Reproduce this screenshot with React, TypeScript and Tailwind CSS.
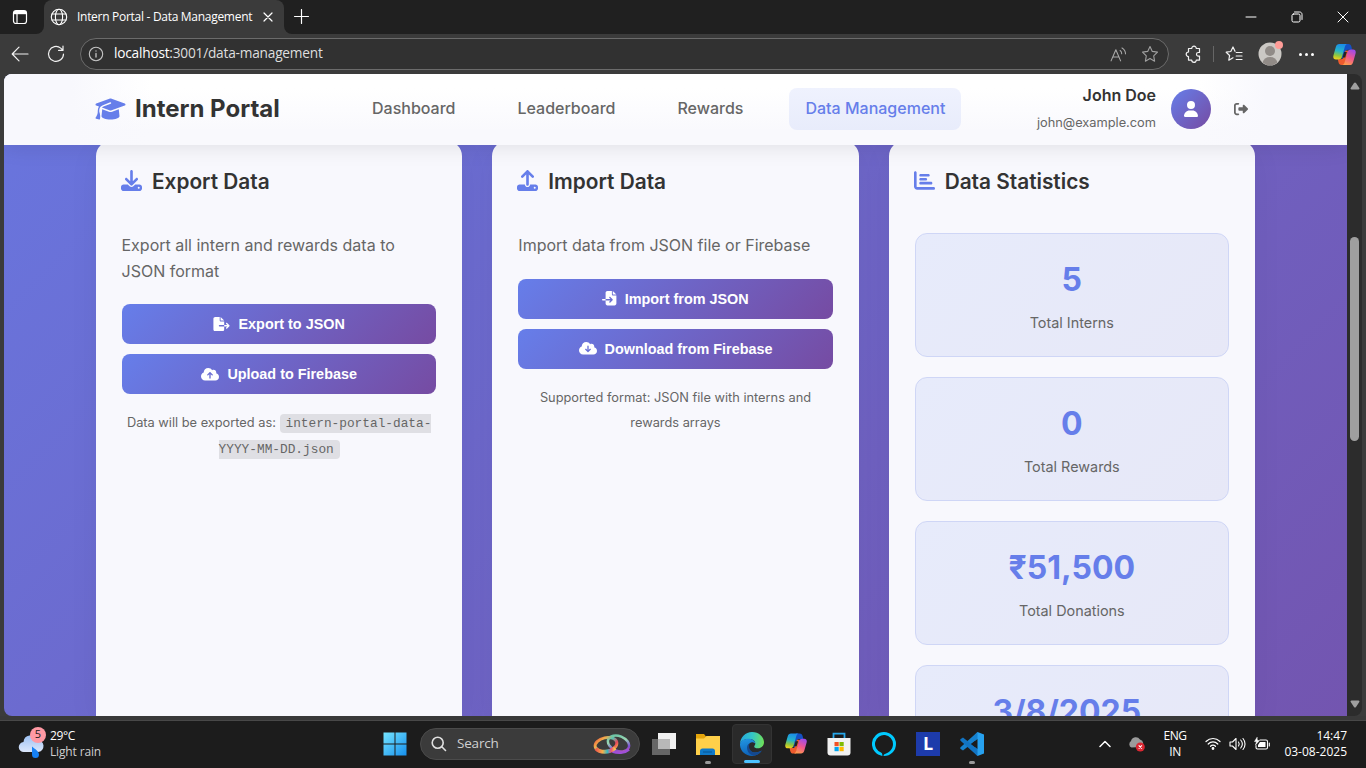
import React from "react";
import {
  FaGraduationCap, FaDownload, FaUpload, FaChartBar, FaFileExport, FaFileImport,
  FaCloudArrowUp, FaCloudArrowDown, FaUser, FaRightFromBracket,
} from "react-icons/fa6";

const S = { fill: "none", stroke: "currentColor", strokeLinecap: "round", strokeLinejoin: "round" } as const;

function CopilotIcon({ id, className }: { id: string; className: string }) {
  return (
    <svg viewBox="0 0 24 22" className={className}>
      <defs>
        <linearGradient id={id + "a"} x1="0.5" y1="0" x2="0.3" y2="1">
          <stop offset="0" stopColor="#1b8ce8" />
          <stop offset="0.45" stopColor="#25b5c9" />
          <stop offset="0.75" stopColor="#8fc63f" />
          <stop offset="1" stopColor="#f2d21c" />
        </linearGradient>
        <linearGradient id={id + "b"} x1="0.7" y1="0" x2="0.3" y2="1">
          <stop offset="0" stopColor="#a04be8" />
          <stop offset="0.5" stopColor="#f0568e" />
          <stop offset="1" stopColor="#ff9d4a" />
        </linearGradient>
      </defs>
      <path d="M12 0h4c2 0 2.700 1 3.200 2.700L20 6h-4.500c-1.500 0-2.200.8-2.700 2.300L11 15H9z" fill="#1450c4" />
      <path d="M12 22H9c-2 0-2.800-1-3.300-2.800L5 16h3.500c1.500 0 2.200-.8 2.700-2.300L13 7h3z" fill="#ee5b2e" />
      <path d="M6.500 0H15c-1.500.3-2.200 1.400-2.700 3.200L9.500 13c-.6 2.200-1.600 3.200-3.700 3.200H3C.8 16.200-.2 14.500.4 12L3 3C3.600 1 4.700 0 6.500 0z" fill={`url(#${id}a)`} />
      <path d="M17.500 22H9.500c1.500-.3 2.200-1.400 2.700-3.200L15 9c.6-2.200 1.600-3.200 3.700-3.200H21c2.200 0 3.200 1.700 2.600 4.200L21 19c-.6 2-1.700 3-3.500 3z" fill={`url(#${id}b)`} />
      <path d="M11.600 8.500h2.800l-1.700 5.600H9.900z" fill="#242424" />
    </svg>
  );
}

function TitleBar() {
  return (
    <div className="flex h-[34px] items-start bg-[#3b3b3b] text-white">
      <div className="flex h-[34px] w-11 items-center justify-center rounded-br-lg bg-[#202020] pr-1">
        <svg viewBox="0 0 16 16" className="size-4" {...S}>
          <rect x="1.500" y="1.500" width="13" height="13" rx="2.500" strokeWidth="1.200" />
          <path d="M5 5v9" strokeWidth="1.200" />
          <path d="M2 2h12v3.200H2z" fill="currentColor" stroke="none" />
        </svg>
      </div>
      <div className="h-[34px] w-60 bg-[#202020]">
        <div className="flex h-[34px] items-center rounded-t-lg bg-[#3b3b3b] pb-px pl-[6px]">
          <svg viewBox="0 0 18 18" className="size-[18px]" {...S} strokeWidth="1.100">
            <circle cx="9" cy="9" r="7.700" />
            <ellipse cx="9" cy="9" rx="3.600" ry="7.700" />
            <path d="M2 6h14M2 12h14" />
          </svg>
          <span className="ml-[9px] w-[176px] whitespace-nowrap font-['Open_Sans',sans-serif] text-[12px] tracking-[-0.29px]">Intern Portal - Data Management</span>
          <svg viewBox="0 0 10 10" className="ml-[10px] size-[10px]" {...S} strokeWidth="1.200"><path d="M1 1l8 8M9 1L1 9" /></svg>
        </div>
      </div>
      <div className="flex h-[34px] flex-1 items-center rounded-bl-lg bg-[#202020] pb-px">
        <svg viewBox="0 0 14 14" className="ml-[10px] size-[15px]" {...S} strokeWidth="1.100"><path d="M7 0.500v13M.5 7h13" /></svg>
        <svg viewBox="0 0 12 12" className="ml-auto size-3" {...S}><path d="M1 6h10" /></svg>
        <svg viewBox="0 0 12 12" className="ml-[34px] size-3" {...S}><rect x="1" y="3" width="8" height="8" rx="1.500" /><path d="M3.500 1h5.200C10 1 11 2 11 3.300v5.200" /></svg>
        <svg viewBox="0 0 12 12" className="ml-[34px] mr-[17px] size-3" {...S}><path d="M1 1l10 10M11 1L1 11" /></svg>
      </div>
    </div>
  );
}

function AddressBar() {
  return (
    <div className="flex h-10 items-center bg-[#3b3b3b] text-[#f2f2f2]">
      <svg viewBox="0 0 18 16" className="ml-[11px] h-4 w-[18px]" {...S} strokeWidth="1.200"><path d="M17 8H1.500M8 1.200L1.200 8 8 14.800" /></svg>
      <svg viewBox="0 0 18 18" className="ml-[18px] size-[18px]" {...S} strokeWidth="1.200"><path d="M16.500 9A7.500 7.500 0 1 1 13.700 3.100L16 5.200M16 1v4.400h-4.400" /></svg>
      <div className="ml-[15px] flex h-8 w-[1089px] items-center rounded-full border border-[#6b6b6b] bg-[#313131] pl-[7px] pr-[9px]">
        <svg viewBox="0 0 16 16" className="size-4 text-[#c4c4c4]" {...S}><circle cx="8" cy="8" r="6.700" strokeWidth="1.100" /><path d="M8 7.500v3.500M8 5v.1" strokeWidth="1.300" /></svg>
        <span className="ml-[10px] pb-px font-['Open_Sans',sans-serif] text-[13.700px] tracking-[-0.22px] text-[#dedede]"><span className="text-white">localhost</span>:3001/data-management</span>
        <svg viewBox="0 0 16 14" className="ml-auto h-[15px] w-[17px] text-[#aaaaaa]" {...S}><path d="M1 13L5.500 2.500 10 13M2.600 9.300h5.800M9.500 3.200c1 .6 1.500 1.600 1.500 3M11.300.8C13.500 2 14.600 4 14.600 6.400" /></svg>
        <svg viewBox="0 0 18 18" className="ml-[14px] size-[18px] text-[#a0a0a0]" {...S} strokeWidth="1.100"><path d="M9 1.500l2.300 4.900 5.200.7-3.800 3.700.9 5.400L9 13.600l-4.600 2.600.9-5.400L1.500 7.100l5.200-.7z" /></svg>
      </div>
      <svg viewBox="0 0 18 18" className="ml-4 size-[18px]" {...S} strokeWidth="1.200"><path d="M3.500 3.500h3.200a2.300 2.300 0 0 1 4.600 0h3.200v4h-1.200a1.800 1.800 0 0 0 0 3.600h1.200v4h-3.200a2.300 2.300 0 0 1-4.600 0H3.500v-3.500a2.300 2.300 0 0 1 0-4.600z" /></svg>
      <div className="ml-[10px] h-4 w-px bg-[#666666]" />
      <svg viewBox="0 0 18 18" className="ml-[11px] size-[18px]" {...S} strokeWidth="1.200"><path d="M8 12.800L3.800 15.200l.8-4.700L1.200 7.200l4.600-.7L8 2l2 4.300M11.200 7.500H17M11.200 11H17M11.200 14.500H17" /></svg>
      <div className="relative ml-[15px] size-6">
        <svg viewBox="0 0 24 24" className="size-6">
          <circle cx="12" cy="12" r="11.500" fill="#cbc8c4" />
          <circle cx="12" cy="9" r="5" fill="#918b87" />
          <path d="M4.500 20.500c1-3.500 3.500-5.500 7.500-5.500s6.500 2 7.500 5.500a11.500 11.500 0 0 1-15 0z" fill="#918b87" />
        </svg>
        <div className="absolute -right-px -top-px size-2 rounded-full bg-[#ff9d98]" />
      </div>
      <div className="ml-[17px] flex gap-[3px]">
        <i className="size-[3px] rounded-full bg-white" /><i className="size-[3px] rounded-full bg-white" /><i className="size-[3px] rounded-full bg-white" />
      </div>
      <CopilotIcon id="top" className="ml-[19px] h-[21px] w-[23px]" />
    </div>
  );
}

function SiteNav() {
  return (
    <nav className="relative z-10 flex h-[71px] shrink-0 items-center bg-[linear-gradient(90deg,#f8f8fd_0%,#f8f8fd_5%,#f8f8fd00_11%,#f8f8fd00_89%,#f8f8fd_94%,#f8f8fd_100%),linear-gradient(180deg,#ffffff_0%,#ffffff_20%,#f9f9fd_80%,#f9f9fd_100%)] px-[91px] pb-[2px] font-[Inter,sans-serif] shadow-[0_2px_20px_rgba(0,0,0,0.1)]">
      <div className="flex w-[185px] items-center gap-[9px]">
        <FaGraduationCap className="h-6 w-[31px] shrink-0 text-[#667eea]" />
        <span className="whitespace-nowrap text-[24px] font-bold text-[#333333]">Intern Portal</span>
      </div>
      <div className="ml-[76px] flex items-center gap-[30px] text-[16px] font-medium text-[#666666]">
        <span className="px-4 pb-[10px] pt-2">Dashboard</span>
        <span className="px-4 pb-[10px] pt-2">Leaderboard</span>
        <span className="px-4 pb-[10px] pt-2">Rewards</span>
        <span className="whitespace-nowrap rounded-lg bg-[linear-gradient(180deg,#eff2fe,#e8ecfb)] px-4 pb-[10px] pt-2 text-[#667eea]">Data Management</span>
      </div>
      <div className="ml-auto flex items-center">
        <div className="flex flex-col items-end text-[#333333]">
          <span className="text-[16px] font-semibold leading-[27px]">John Doe</span>
          <span className="text-[12.800px] leading-[27px] text-[#666666]">john@example.com</span>
        </div>
        <div className="ml-[15px] flex size-10 items-center justify-center rounded-full bg-[linear-gradient(135deg,#667eea,#764ba2)] text-white"><FaUser className="size-4" /></div>
        <FaRightFromBracket className="ml-[23px] mr-[8px] size-[14px] text-[#666666]" />
      </div>
    </nav>
  );
}

function ActionButton({ icon, label }: { icon: React.ReactNode; label: string }) {
  return (
    <button className="flex h-10 w-full items-center justify-center gap-2 rounded-lg bg-[linear-gradient(135deg,#667eea,#764ba2)] font-['Liberation_Sans',Arial,sans-serif] text-[14.400px] font-bold text-white">
      {icon}<span className="pt-[2px]">{label}</span>
    </button>
  );
}

function Card({ icon, title, children }: { icon: React.ReactNode; title: string; children: React.ReactNode }) {
  return (
    <section className="-mt-1 min-w-0 flex-1 rounded-t-[15px] bg-[#f8f8fd] px-[26px] shadow-[0_8px_32px_rgba(0,0,0,0.05)]">
      <h2 className="flex h-[80px] items-center gap-[10px] text-[20.800px] font-semibold text-[#333333]">
        <span className="-ml-px pb-px text-[#667eea]">{icon}</span><span className="pt-[2px]">{title}</span>
      </h2>
      {children}
    </section>
  );
}

const stats = [
  ["5", "Total Interns"],
  ["0", "Total Rewards"],
  ["₹51,500", "Total Donations"],
  ["3/8/2025,", "Last Updated"],
];

function Page() {
  return (
    <div className="flex min-w-0 flex-1 flex-col overflow-hidden rounded-bl-lg rounded-tl-lg bg-[linear-gradient(135deg,#667eea_-25%,#764ba2_130%)]">
      <SiteNav />
      <main className="flex min-h-0 flex-1 gap-[30px] px-[92px] font-[Inter,sans-serif] leading-[25.600px] text-[#666666]">
        <Card icon={<FaDownload className="size-[21px]" />} title="Export Data">
          <p className="-ml-[0.500px] mt-3 text-[16px]">Export all intern and rewards data to JSON format</p>
          <div className="mt-5 flex flex-col gap-[10px]">
            <ActionButton icon={<FaFileExport className="h-[14.400px] w-[17px]" />} label="Export to JSON" />
            <ActionButton icon={<FaCloudArrowUp className="h-[14.400px] w-[18px]" />} label="Upload to Firebase" />
          </div>
          <p className="-mx-1 mt-4 text-center text-[12.800px] leading-[26px]">
            Data will be exported as: <code className="rounded bg-[#dfdfe4] px-[6px] py-[2px] font-['Liberation_Mono','Courier_New',monospace] text-[12.800px] leading-none">intern-portal-data-YYYY-MM-DD.json</code>
          </p>
        </Card>
        <Card icon={<FaUpload className="size-[21px]" />} title="Import Data">
          <p className="mt-3 text-[16px]">Import data from JSON file or Firebase</p>
          <div className="mt-5 flex flex-col gap-[10px]">
            <ActionButton icon={<FaFileImport className="size-[14.400px]" />} label="Import from JSON" />
            <ActionButton icon={<FaCloudArrowDown className="h-[14.400px] w-[18px]" />} label="Download from Firebase" />
          </div>
          <p className="mt-4 text-center text-[12.800px]">Supported format: JSON file with interns and rewards arrays</p>
        </Card>
        <Card icon={<FaChartBar className="size-[21px]" />} title="Data Statistics">
          <div className="mt-3 flex flex-col gap-5">
            {stats.map(([value, label]) => (
              <div key={label} className="flex h-[124px] shrink-0 flex-col items-center rounded-xl border border-[#cfd6f6] bg-[linear-gradient(135deg,#e7ebfb,#e7e8f7)] pt-5">
                <strong className="text-[32px] font-bold leading-[51px] text-[#667eea]">{value}</strong>
                <span className="mt-[5px] text-[14.400px] leading-[25px]">{label}</span>
              </div>
            ))}
          </div>
        </Card>
      </main>
    </div>
  );
}

function Scrollbar() {
  return (
    <div className="mr-1 flex w-[15px] flex-col items-center rounded-r-lg bg-[#2c2c2c] py-[8px]">
      <svg viewBox="0 0 10 8" className="h-2 w-[10px] shrink-0"><path d="M4 1c.5-.8 1.500-.8 2 0l3.300 5c.4.700 0 1.500-.8 1.500h-7C.7 7.500.3 6.700.7 6z" fill="#9f9f9f" /></svg>
      <div className="mt-[147px] h-[204px] w-[9px] rounded-full bg-[#9f9f9f]" />
      <svg viewBox="0 0 10 8" className="mt-auto h-2 w-[10px] shrink-0 rotate-180"><path d="M4 1c.5-.8 1.500-.8 2 0l3.300 5c.4.700 0 1.500-.8 1.500h-7C.7 7.500.3 6.700.7 6z" fill="#9f9f9f" /></svg>
    </div>
  );
}

function EdgeIcon() {
  return (
    <svg viewBox="0 0 24 24" className="size-6">
      <defs>
        <linearGradient id="ea" x1="0" y1="0.300" x2="1" y2="0.400"><stop offset="0" stopColor="#25a7e0" /><stop offset="0.500" stopColor="#34c6c6" /><stop offset="1" stopColor="#6ee05a" /></linearGradient>
        <linearGradient id="eb" x1="0" y1="0" x2="0.300" y2="1"><stop offset="0" stopColor="#2398e4" /><stop offset="1" stopColor="#0d62b8" /></linearGradient>
      </defs>
      <path d="M0 12C.3 5 5.500 0 12 0c7 0 12 5 12 10.300 0 3.500-2.700 6-6 6-2.500 0-4-1-3.800-1.900.2-.7 1.100-1.100 1.100-2.800C15.300 9 13 7 9 7 4.500 7 .8 9 0 12z" fill="url(#ea)" />
      <path d="M0 12c.6-3.200 4-5.300 8.500-5.300 4 0 6.700 2.200 6.800 5-1.300-1.500-3.700-2-5.300-.7-3.500 2.800-1 9.500 5.200 9.500 2.800 0 5-1 6.600-1.900C19.500 22 16 24 12 24 5.200 24-.3 18.500 0 12z" fill="url(#eb)" />
      <path d="M9.800 11.200C5 13 6.500 23 14.500 23.700 18 23 20.500 21 21.800 18.600c-1.600.9-3.800 1.900-6.600 1.900-5 0-7.500-5.500-5.400-9.300z" fill="#14488f" />
    </svg>
  );
}

function Taskbar() {
  return (
    <footer className="flex h-[47px] shrink-0 items-center bg-[#1c1c1c] pb-[2px] font-['Open_Sans',sans-serif] text-[12px] text-white">
      <div className="relative ml-[18px] h-8 w-7">
        <svg viewBox="0 0 28 32" className="h-8 w-7">
          <defs><linearGradient id="cl" x1="0" y1="0" x2="0" y2="1"><stop offset="0" stopColor="#9dc1f3" /><stop offset="1" stopColor="#dce7fb" /></linearGradient></defs>
          <path d="M6 24a5 5 0 0 1-.5-10 7 7 0 0 1 13.500-2 6 6 0 0 1 1 12z" fill="url(#cl)" />
          <path d="M14 18.500c3 2.500 7 5 7 8a3.500 3.500 0 0 1-7 0z" fill="#1681f5" />
        </svg>
        <span className="absolute -top-px left-3 flex size-4 items-center justify-center rounded-full bg-[#ff99a4] text-[11px] text-[#202020]">5</span>
      </div>
      <div className="ml-1 w-[100px] leading-4"><div className="tracking-[-0.4px]">29°C</div><div className="tracking-[-0.15px] text-[#cfcfcf]">Light rain</div></div>
      <svg viewBox="0 0 24 24" className="ml-[233px] size-6 shrink-0">
        <defs><linearGradient id="wn" x1="0" y1="0" x2="1" y2="1"><stop offset="0" stopColor="#75e5ff" /><stop offset="1" stopColor="#168fed" /></linearGradient></defs>
        <path d="M.5.500h11v11H.5zM12.500.500h11v11h-11zM.5 12.500h11v11H.5zM12.500 12.500h11v11h-11z" fill="url(#wn)" />
      </svg>
      <div className="ml-[13px] flex h-8 w-[220px] shrink-0 items-center rounded-full border border-[#4b4b4b] bg-[#3b3b3b] pl-[10px] pr-[8px]">
        <svg viewBox="0 0 16 16" className="size-4 text-[#e0e0e0]" {...S} strokeWidth="1.600"><circle cx="6.700" cy="6.700" r="5.500" /><path d="M10.800 10.800L14.500 14.500" /></svg>
        <span className="ml-[10px] text-[13.500px] tracking-[-0.2px] text-[#d0d0d0]">Search</span>
        <svg viewBox="0 0 38 22" className="ml-auto h-[22px] w-[38px]" fill="none" strokeWidth="3">
          <defs>
            <linearGradient id="ra" x1="0" y1="0" x2="1" y2="1"><stop offset="0" stopColor="#ea5a3e" /><stop offset=".25" stopColor="#f4ad4a" /><stop offset=".5" stopColor="#57c5b5" /><stop offset=".75" stopColor="#e74758" /><stop offset="1" stopColor="#f7c04a" /></linearGradient>
            <linearGradient id="rb" x1="0" y1="0" x2="1" y2="1"><stop offset="0" stopColor="#58bb9e" /><stop offset=".4" stopColor="#9bd7b4" /><stop offset=".7" stopColor="#7c4bd8" /><stop offset="1" stopColor="#ee6b8d" /></linearGradient>
            <linearGradient id="rc" x1="0" y1="0" x2="1" y2="0"><stop offset="0" stopColor="#f05a4a" /><stop offset=".35" stopColor="#f7b04a" /><stop offset=".6" stopColor="#35b9c4" /><stop offset=".8" stopColor="#ef4f7a" /><stop offset="1" stopColor="#f7d04a" /></linearGradient>
          </defs>
          <ellipse cx="25.500" cy="10.500" rx="11" ry="7.500" transform="rotate(22 25.500 10.500)" stroke="url(#rb)" strokeWidth="2.500" />
          <path d="M19.500 18.500c5 2 12 2 16.500-2" stroke="#a04fd8" strokeWidth="2.500" />
          <ellipse cx="13" cy="11.500" rx="11" ry="6.800" transform="rotate(-12 13 11.500)" stroke="url(#ra)" />
          <path d="M3 15.500c4 4.500 13 4.500 19-.5" stroke="url(#rc)" strokeWidth="4" />
        </svg>
      </div>
      <svg viewBox="0 0 24 24" className="ml-3 size-6 shrink-0">
        <path d="M6 1h18v16H6z" fill="#f1f1f1" /><path d="M0 7h18v16H0z" fill="#666666" /><path d="M6 7h12v10H6z" fill="#b8b8b8" />
      </svg>
      <div className="relative ml-5 size-6 shrink-0">
        <svg viewBox="0 0 24 24" className="size-6"><path d="M0 2h8l2 2.500h14V22H0z" fill="#e5a50b" /><path d="M0 6.500h8l2.500-2.500H24v19H0z" fill="#ffd04a" /><path d="M4 23v-4c0-1.500 1-2.500 2.500-2.500h10c1.500 0 2.500 1 2.500 2.500v4z" fill="#0f79c8" /><path d="M7 20h9" stroke="#075a9c" strokeWidth="1.200" /></svg>
        <i className="absolute -bottom-2 left-[9px] h-[3px] w-[6px] rounded-full bg-[#9a9a9a]" />
      </div>
      <div className="relative ml-3 flex h-10 w-10 shrink-0 items-center justify-center rounded-[4px] border border-[#333333] bg-[#2a2a2a]"><EdgeIcon /><i className="absolute bottom-0 left-[11px] h-[3px] w-4 rounded-full bg-[#4cc2ff]" /></div>
      <CopilotIcon id="task" className="ml-[13px] h-[21px] w-[22px] shrink-0" />
      <svg viewBox="0 0 24 24" className="ml-5 size-6 shrink-0"><path d="M6.500 6V1.700h11V6" fill="none" stroke="#28a8ea" strokeWidth="1.800" /><path d="M.5 6h23v14.500c0 2-1 3-3 3h-17c-2 0-3-1-3-3z" fill="#f1f1f1" /><path d="M7.500 10h4.200v4.200H7.500z" fill="#f25022" /><path d="M12.500 10h4.200v4.200h-4.200z" fill="#7fba00" /><path d="M7.500 15h4.200v4.200H7.500z" fill="#00a4ef" /><path d="M12.500 15h4.200v4.200h-4.200z" fill="#ffb900" /></svg>
      <svg viewBox="0 0 24 24" className="ml-[21px] size-6 shrink-0" fill="#00caff"><path fillRule="evenodd" d="M12 0a12 12 0 0 1 0 24c-1 0-.5-1.500 1-2 4.500-1.500 8-5 8-10a9 9 0 1 0-12 8.500c1 .4 1.400 1.300 1.400 3.400A12 12 0 0 1 12 0z" /></svg>
      <div className="ml-5 flex size-6 shrink-0 items-center justify-center bg-[#1d3bab] font-['Open_Sans',sans-serif] text-[18px] font-bold">L</div>
      <div className="relative ml-5 size-6 shrink-0">
        <svg viewBox="0 0 24 24" className="size-6"><path d="M17.500 0L24 2.500v19L17.500 24 15 21V3z" fill="#27a1ef" /><path d="M17.500 0v7L3 18.500.3 16.800v-1.300z" fill="#1681ce" /><path d="M17.500 24v-7L3 5.500.3 7.200v1.300z" fill="#1274c3" /><path d="M17.500 7v10L11 12z" fill="#1c1c1c" /></svg>
        <i className="absolute -bottom-2 left-[9px] h-[3px] w-[6px] rounded-full bg-[#9a9a9a]" />
      </div>
      <svg viewBox="0 0 12 8" className="ml-auto h-2 w-3 shrink-0" {...S} strokeWidth="1.500"><path d="M1 6.500l5-5 5 5" /></svg>
      <svg viewBox="0 0 18 16" className="ml-[17px] h-4 w-[18px] shrink-0"><path d="M3.500 11.500A3.700 3.700 0 0 1 3 5a5 5 0 0 1 9-1.500A4 4 0 0 1 13 11z" fill="#9b9b9b" /><circle cx="12.300" cy="11" r="4.500" fill="#dc2732" /><path d="M10.700 9.400l3.200 3.200M13.900 9.400l-3.200 3.200" stroke="#fff" strokeWidth="1.100" /></svg>
      <div className="ml-[15px] w-[28px] text-center leading-4 tracking-[-0.4px]">ENG<br />IN</div>
      <svg viewBox="0 0 16 13" className="ml-[16px] h-[13px] w-4 shrink-0" {...S} strokeWidth="1.200"><path d="M1 4.500c4-4 10-4 14 0M3.200 7c2.800-2.800 6.800-2.800 9.600 0M5.500 9.300c1.500-1.400 3.500-1.400 5 0" /><circle cx="8" cy="11.500" r=".8" fill="currentColor" /></svg>
      <svg viewBox="0 0 17 14" className="ml-2 h-[14px] w-[17px] shrink-0" {...S} strokeWidth="1.100"><path d="M1 5h2.500L7 1.500v11L3.500 9H1zM9.500 5c.9 1.200.9 2.800 0 4M11.700 3c2 2.400 2 5.600 0 8M14 1.500c2.700 3.200 2.700 7.800 0 11" /></svg>
      <svg viewBox="0 0 17 14" className="ml-[7px] h-[14px] w-[17px] shrink-0" {...S} strokeWidth="1.100"><path d="M7 3h6c1 0 1.500.5 1.500 1.500v6c0 1-.5 1.500-1.500 1.500H4.500C3.500 12 3 11.500 3 10.500V8.500M16.300 6v3" /><path d="M7 5h5.500v5H5V8z" fill="currentColor" stroke="none" /><path d="M4 .5L1.500 4.500h2L2.500 8l4-4.500H4.500z" fill="currentColor" strokeWidth=".5" /></svg>
      <div className="ml-[8px] mr-[19px] w-[69px] shrink-0 whitespace-nowrap text-right leading-4">14:47<br />03-08-2025</div>
    </footer>
  );
}

export default function App() {
  return (
    <div className="flex h-[768px] w-[1366px] flex-col overflow-hidden bg-[#3b3b3b]">
      <TitleBar />
      <AddressBar />
      <div className="flex h-[642px] shrink-0 pl-1"><Page /><Scrollbar /></div>
      <div className="h-[5px] shrink-0 border-b border-[#484848] bg-[#393939]" />
      <Taskbar />
    </div>
  );
}
